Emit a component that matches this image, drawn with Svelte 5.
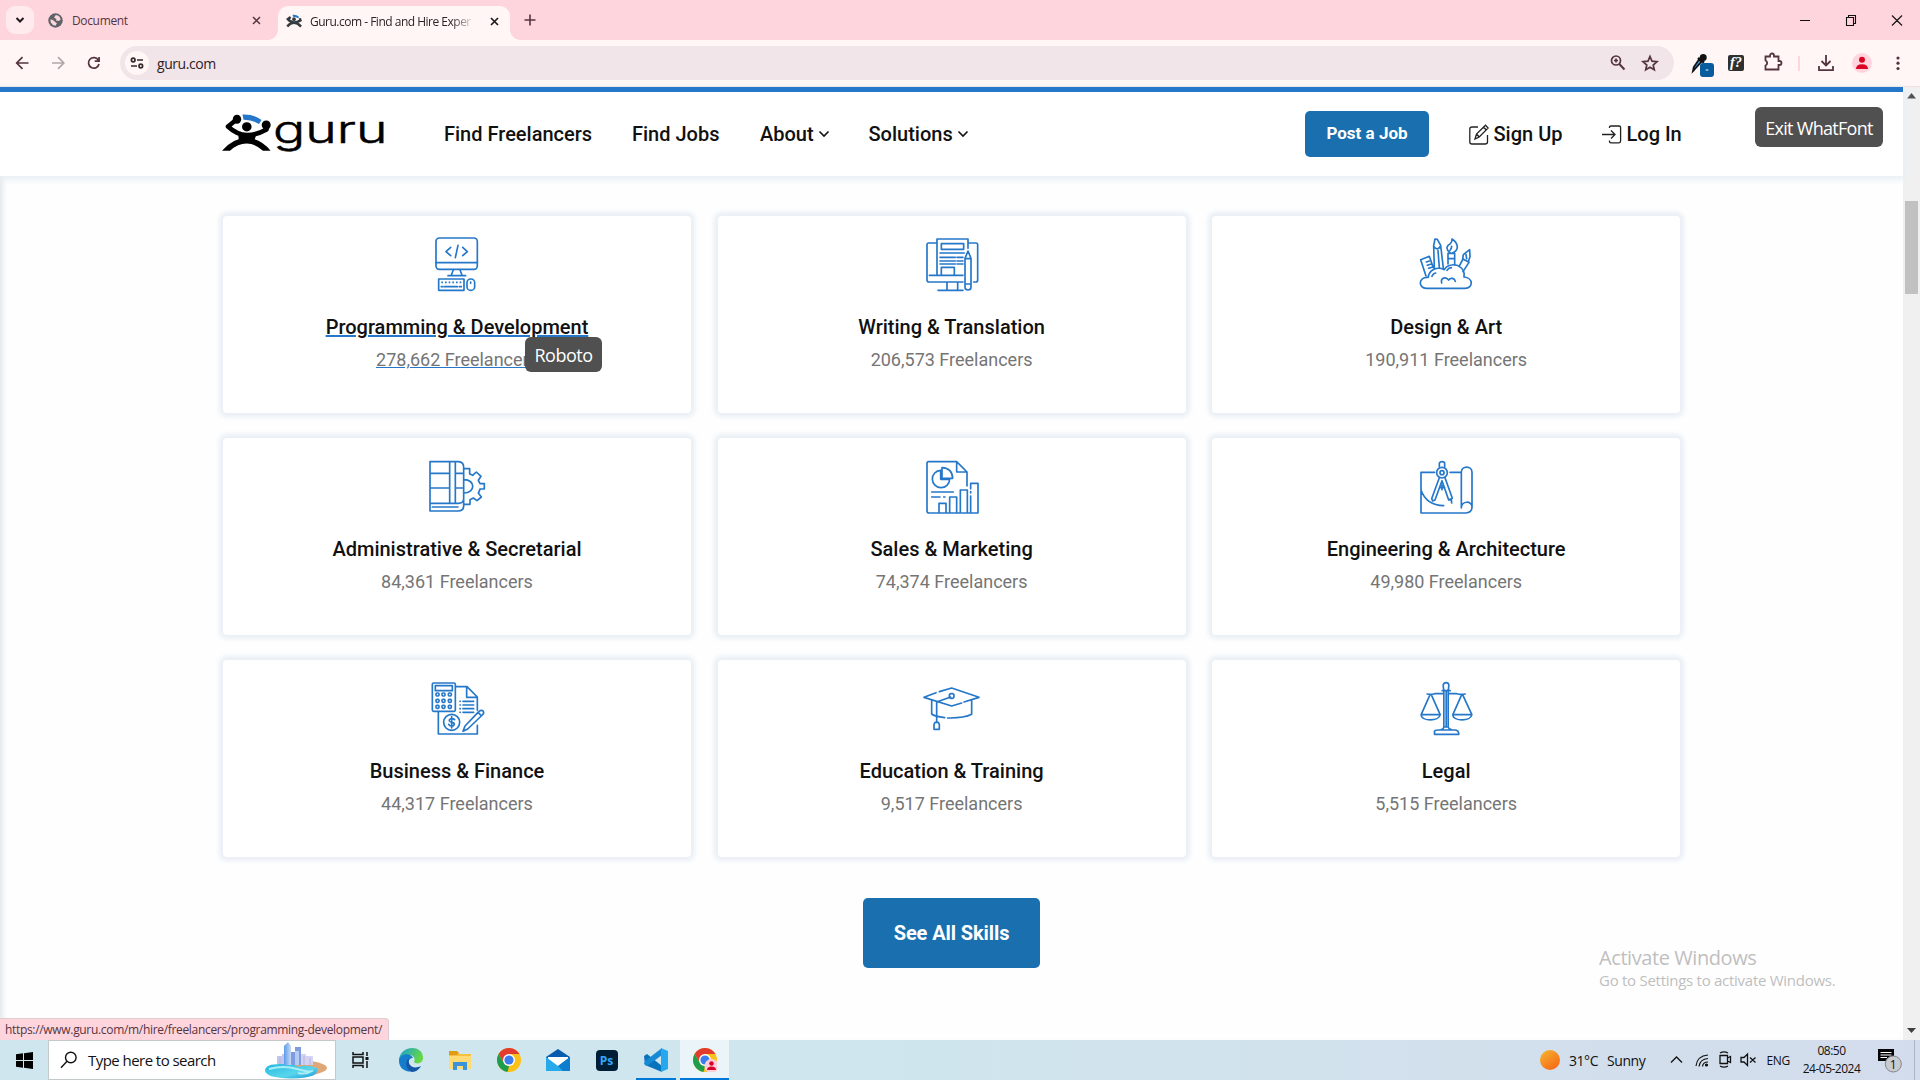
<script>
  const cards = [
    {
      title: 'Programming & Development', count: '278,662 Freelancers', hovered: true, box: '681 102 180 180',
      art: '<rect x="708" y="114" width="124" height="94" rx="10"/><path d="M708 188H832M760 209L754 226M780 209L786 226M744 227H797M752 142L738 155L752 167M788 142L802 155L788 167M774 136L766 173"/><rect x="716" y="237" width="76" height="34"/><rect x="801" y="237" width="23" height="34" rx="11"/><path d="M724 247H784" stroke-dasharray="5 6" stroke-linecap="butt"/><path d="M724 260H729M734 260H772M778 260H784M812 246V250"/>'
    },
    {
      title: 'Writing & Translation', count: '206,573 Freelancers', box: '64 57 180 180',
      art: '<path d="M107 84H84Q79 84 79 89V195Q79 201 85 201H187M204 84H226Q231 84 231 89V195Q231 201 226 201H219M86 181H187M109 180V72H202V100M139 203V224M171 203V224M112 226H187"/><rect x="122" y="86" width="67" height="17"/><path d="M118 114H191M118 127H164M169 127H187M118 138H164M169 138H187M118 147H164M169 147H187M122 180V157H161V180"/><path d="M193 130L202 108L211 130V217Q211 225 202 225Q193 225 193 217ZM193 131H211M193 207H211"/>'
    },
    {
      title: 'Design & Art', count: '190,911 Freelancers', box: '49 57 180 180',
      art: '<path d="M83 187C55 187 56 220 80 220H196C222 220 221 188 193 186C197 164 178 146 156 150C145 151 138 157 134 164C111 153 87 166 86 187M126 204C122 189 138 183 147 195C153 186 165 190 167 199M97 184Q99 176 108 174M142 166Q147 158 155 158"/><path d="M79 183L63 134L89 124L101 158M80 141L89 138M83 151L97 146M87 160L99 156M104 160L102 92L106 72L113 73L123 91L131 160M102 94Q113 110 123 93M115 107L119 158M145 147V115H165V149M145 131H165M151 113C136 101 142 91 151 87Q158 81 157 72Q172 82 173 95Q173 108 158 114M156 94Q155 103 151 106M180 151L190 132L208 142L190 170M189 132L191 119L210 104L211 125L206 140M199 119L201 131"/>'
    },
    {
      title: 'Administrative & Secretarial', count: '84,361 Freelancers', box: '51 34 180 180',
      art: '<path d="M60 51H145Q161 52 161 68V185Q160 199 145 199H60ZM60 176H145Q160 176 161 163M60 86H119M136 86H161M60 130H119M136 130H161M119 51V176M136 51V176M67 187H144M161 72H179V88Q184 89 188 92L199 82L213 95L205 107L210 117H223V133H210Q208 140 205 145L214 157L201 168L190 160L180 165V179H161M162 105C197 105 197 145 162 145"/>'
    },
    {
      title: 'Sales & Marketing', count: '74,374 Freelancers', box: '64 34 180 180',
      art: '<path d="M199 124V82L168 51H84Q79 51 79 57V199Q79 205 85 205H232V116H210V132M168 52V82H198M210 141V145M210 154V204M115 204V176H136V204M147 204V157H168V204M179 204V136H200V204M93 142H158M93 157H118M129 157H133"/><path d="M120 77A26 26 0 1 0 147 104H120ZM124 69V101H156Q155 71 124 69Z"/>'
    },
    {
      title: 'Engineering & Architecture', count: '49,980 Freelancers', box: '49 34 180 180',
      art: '<path d="M105 83H64V205H198Q217 204 217 187V83C217 62 185 62 185 83V190M151 83H184M185 189C186 167 217 168 217 187M64 136Q80 182 132 183"/><circle cx="127" cy="84" r="16"/><circle cx="127" cy="84" r="6"/><path d="M119 67V57Q120 51 127 51Q135 51 135 57V67M119 99L96 162L99 169L106 166L127 108L147 166L155 165L156 175M136 99L158 161L147 166M120 129H135M127 122V135"/>'
    },
    {
      title: 'Business & Finance', count: '44,317 Freelancers', box: '51 27 180 180',
      art: '<rect x="67" y="42" width="69" height="85" rx="4"/><rect x="76" y="50" width="51" height="15"/><path d="M137 53H171L202 84V124M85 128V195H202V169M170 54V85H202"/><rect x="78" y="72" width="9" height="9" rx="3"/><rect x="96" y="72" width="9" height="9" rx="3"/><rect x="115" y="72" width="9" height="9" rx="3"/><rect x="78" y="91" width="9" height="9" rx="3"/><rect x="96" y="91" width="9" height="9" rx="3"/><rect x="115" y="91" width="9" height="9" rx="3"/><rect x="78" y="109" width="9" height="9" rx="3"/><rect x="96" y="109" width="9" height="9" rx="3"/><rect x="115" y="109" width="9" height="9" rx="3"/><path d="M150 97H151M159 97H191M150 108H151M159 108H191M150 119H151M159 119H191M150 130H151M159 130H191"/><circle cx="125" cy="160" r="24"/><path d="M134 152C128 146 116 149 118 156C121 162 134 158 133 166C130 174 119 172 116 166M125 143V177M159 187L165 171L207 127Q215 121 220 127Q223 132 217 138L173 180ZM204 130L214 140"/>'
    },
    {
      title: 'Education & Training', count: '9,517 Freelancers', box: '64 27 180 180',
      art: '<path d="M106 71L70 85L153 111L183 102M190 99L235 85L153 57L116 68M93 95V135Q101 142 132 146M141 147Q190 148 213 136V94M108 158V99L150 84"/><rect x="146" y="74" width="14" height="14" rx="6"/><path d="M103 160H113L116 166V181H100V166Z"/>'
    },
    {
      title: 'Legal', count: '5,515 Freelancers', box: '1549.5 27 180 180',
      art: '<path d="M1633 174V61M1646 174V61M1632 60L1631 48Q1633 41 1640 41Q1647 41 1648 48L1647 61M1628 65H1652M1583 75Q1595 78 1606 74H1633M1697 75Q1684 78 1672 74H1646M1592 76L1565 137C1566 158 1619 158 1622 137L1595 76M1565 137H1622M1687 76L1660 137C1661 158 1714 158 1717 137L1689 76M1660 137H1717M1605 196V187Q1606 183 1615 183H1665Q1678 183 1678 196ZM1625 182Q1632 181 1633 174H1646Q1648 181 1656 182M1640 66V174"/>'
    }
  ];
</script>

{#snippet chrome(clip)}
  <svg class="app" viewBox="0 0 24 24">
    <circle cx="12" cy="12" r="12" fill="#fbc116" />
    <path d="M1.6 6A12 12 0 0 1 22.4 6H12L7 15Z" fill="#e33b2e" />
    <path d="M1.6 6L6.8 15Q9 18 12 18L10.5 23.9A12 12 0 0 1 1.6 6Z" fill="#1e9e4c" />
    <circle cx="12" cy="12" r="6" fill="#fff" /><circle cx="12" cy="12" r="4.6" fill="#3b7ded" />
    {#if clip}
      <circle cx="18.5" cy="18" r="7" fill="#fbd0da" /><circle cx="18.5" cy="15.5" r="2.3" fill="#d9032b" /><path d="M14 22Q14 18.5 18.5 18.5T23 22Z" fill="#d9032b" />
    {/if}
  </svg>
{/snippet}

<div class="screen">
  <div class="tabs">
    <div class="tabsearch"><svg width="10" height="10" viewBox="0 0 10 10"><path d="M1.5 3L5 6.5L8.5 3" fill="none" stroke="#1f1a1c" stroke-width="2" /></svg></div>
    <div class="tab idle">
      <svg width="15" height="15" viewBox="0 0 16 16"><circle cx="8" cy="8" r="7.7" fill="#5f6368" /><path d="M2.5 7Q5 7 6.5 8.5T9.5 11L8 13.5Q4.5 13 3 10ZM8 2.5L6.5 5L9 6.5L8.5 8L11.5 8.5L13.5 7Q13 3.5 10 2.5Z" fill="#ffd5dd" /></svg>
      <span>Document</span>
      <svg class="x" width="9" height="9" viewBox="0 0 9 9"><path d="M1 1L8 8M8 1L1 8" stroke="#54353f" stroke-width="1.5" /></svg>
    </div>
    <div class="tab active">
      <svg width="16" height="14" viewBox="0 0 52 40"><path d="M15 7L6 14Q16 25 26 25T47 18L45 11M4 38Q25 14 49 38" fill="none" stroke="#353c40" stroke-width="8" /><circle cx="26" cy="14" r="6" fill="#353c40" /><path d="M22 3Q33 2 41 9" fill="none" stroke="#2477c9" stroke-width="6" /></svg>
      <span class="fade">Guru.com - Find and Hire Exper</span>
      <svg class="x" width="9" height="9" viewBox="0 0 9 9"><path d="M1 1L8 8M8 1L1 8" stroke="#1f1a1c" stroke-width="1.7" /></svg>
    </div>
    <svg class="plus" width="12" height="12" viewBox="0 0 12 12"><path d="M6 .5V11.5M.5 6H11.5" stroke="#54353f" stroke-width="1.6" /></svg>
    <svg class="wincontrols" width="104" height="14" viewBox="0 0 104 14" fill="none" stroke="#111" stroke-width="1.1"><path d="M1 7.5H11M47.5 4.5H54.5V12.5H47.5ZM49.5 4.5V2.5H56.5V10.5H54.5M93 2.5L103 12.5M103 2.5L93 12.5" /></svg>
  </div>

  <div class="toolbar">
    <svg class="navicons" width="96" height="20" viewBox="0 0 96 20" fill="none" stroke-width="1.7"><path d="M20.5 10H9M14.5 4.2L8.7 10L14.5 15.8" stroke="#54353f" /><path d="M44 10H55.5M50 4.2L55.8 10L50 15.8" stroke="#b4a5a9" /><path d="M90.3 7A5.3 5.3 0 1 0 91 11M91.1 4V8.2H86.7" stroke="#54353f" /></svg>
    <div class="omni">
      <div class="chip"><svg width="14" height="12" viewBox="0 0 14 12" fill="none" stroke="#332a2d" stroke-width="1.7"><circle cx="3.2" cy="3" r="1.8" /><path d="M7 3H13M1 9H7" /><circle cx="10.8" cy="9" r="1.8" /></svg></div>
      <span>guru.com</span>
      <svg class="omniicons" width="56" height="20" viewBox="0 0 56 20" fill="none" stroke="#54353f" stroke-width="1.7"><circle cx="8" cy="7.5" r="4.5" /><path d="M11.3 11L16.5 16.5" stroke-width="2" /><path d="M6 7.5H10M8 5.5V9.5" /><path d="M42 3.5L44 8.2L49 8.6L45.2 12L46.3 16.8L42 14.2L37.7 16.8L38.8 12L35 8.6L40 8.2Z" /></svg>
    </div>
    <svg class="ext" width="222" height="28" viewBox="0 0 222 28" fill="none">
      <path d="M7 21L6 22L6.8 18L12 10.5L14.5 12.5Z" fill="#42a5ef" stroke="#111" stroke-width="1.8" /><path d="M11 9L17 13.5" stroke="#111" stroke-width="2.6" /><circle cx="16.2" cy="8.6" r="3.5" fill="#111" />
      <rect x="13" y="14" width="14" height="14" rx="3" fill="#075b9f" /><path d="M18.7 21H21.3" stroke="#fff" />
      <rect x="41" y="6" width="16" height="16" rx="2" fill="#303030" /><text x="43" y="18" font-family="Liberation Serif, serif" font-size="14" font-style="italic" font-weight="bold" fill="#fff" textLength="12" lengthAdjust="spacingAndGlyphs">f?</text>
      <path d="M78.5 7.5H83V6.5A2 2 0 0 1 87 6.5V7.5H91.5V12H92.5A2 2 0 0 1 92.5 16H91.5V20.5H78.5V16.5A2.7 2.7 0 0 0 78.5 11.5Z" stroke="#54353f" stroke-width="1.8" />
      <path d="M112 7V22" stroke="#ffd5dd" stroke-width="2" />
      <path d="M139 6V16M134.5 12L139 16.5L143.5 12M132 17V21.2H146V17" stroke="#54353f" stroke-width="1.8" />
      <circle cx="175" cy="14" r="10" fill="#ffd5dd" /><circle cx="175" cy="10.7" r="3" fill="#db0424" /><path d="M169 20Q169 15.2 175 15.2T181 20Z" fill="#db0424" />
      <g fill="#54353f"><circle cx="211" cy="9" r="1.6" /><circle cx="211" cy="14.2" r="1.6" /><circle cx="211" cy="19.5" r="1.6" /></g>
    </svg>
  </div>

  <div class="view">
    <main>
      <header>
        <svg class="logo" width="170" height="64" viewBox="0 -9 170 64">
          <path d="M15 8L7 14.5Q16 23 26 23T45.5 17.5L46 12" fill="none" stroke="#000" stroke-width="4.6" stroke-linejoin="round" />
          <path d="M17 20Q26 24 36 20L33 30Q26 27 18 30Z" />
          <path d="M1 38.7Q12 26 25.5 26T49.6 38.7H42Q34 31.5 25.5 31.5T9 38.7Z" />
          <ellipse cx="16" cy="7.3" rx="4.2" ry="4.5" /><ellipse cx="45.2" cy="13" rx="4.5" ry="4.6" /><ellipse cx="25.8" cy="14.8" rx="4.8" ry="4.6" />
          <path d="M21.5 2.5Q33 2 40.5 8L38 12Q31 7.5 22.5 7.7Z" fill="#2477c9" />
          <text x="52" y="30.6" font-family="Inter, sans-serif" font-size="38.5" font-weight="300" textLength="114.5" lengthAdjust="spacingAndGlyphs" stroke="#000" stroke-width=".5">guru</text>
        </svg>
        <nav>
          <span>Find Freelancers</span><span>Find Jobs</span>
          <span>About<svg width="12" height="8" viewBox="0 0 12 8"><path d="M1.5 1.5L6 6L10.5 1.5" fill="none" stroke="#111" stroke-width="1.6" /></svg></span>
          <span>Solutions<svg width="12" height="8" viewBox="0 0 12 8"><path d="M1.5 1.5L6 6L10.5 1.5" fill="none" stroke="#111" stroke-width="1.6" /></svg></span>
        </nav>
        <button class="post">Post a Job</button>
        <a class="account sign" href="#signup"><svg width="20" height="21" viewBox="0 0 20 21" fill="none" stroke="#222" stroke-width="1.3"><path d="M9 3H3Q.8 3 .8 5V18Q.8 20 3 20H16Q18.5 20 18.5 18V11M6 15L7.5 10L16.5 1.2L19.2 4L10.2 13ZM7.5 10L10.2 13M14.5 3L17.3 6" /></svg>Sign Up</a>
        <a class="account login" href="#login"><svg width="20" height="19" viewBox="0 0 20 19" fill="none" stroke="#222" stroke-width="1.3"><path d="M0 9.5H13M9 5.5L13 9.5L9 13.5M7.5 3V2Q7.5 1 9 1H17Q18.6 1 18.6 2.5V16Q18.6 17.8 17 17.8H9Q7.5 17.8 7.5 16.5V15.5" /></svg>Log In</a>
        <div class="whatfont">Exit WhatFont</div>
      </header>
      <section class="content">
        <div class="grid">
          {#each cards as card}
            <article class:hovered={card.hovered}>
              <svg viewBox={card.box} width="60" height="60">{@html card.art}</svg>
              <h3>{card.title}</h3>
              <p>{card.count}</p>
              {#if card.hovered}<div class="tip">Roboto</div>{/if}
            </article>
          {/each}
        </div>
        <button class="all">See All Skills</button>
      </section>
      <div class="watermark"><div>Activate Windows</div><p>Go to Settings to activate Windows.</p></div>
      <div class="status"><span>https://www.guru.com/m/hire/freelancers/programming-development/</span></div>
    </main>
    <div class="scroll">
      <svg width="9" height="6" viewBox="0 0 9 6"><path d="M0 5.5L4.5 0L9 5.5Z" fill="#505050" /></svg>
      <div class="thumb"></div>
      <svg class="down" width="9" height="6" viewBox="0 0 9 6"><path d="M0 0L4.5 5L9 0Z" fill="#404040" /></svg>
    </div>
  </div>

  <footer>
    <div class="start"><svg width="17" height="17" viewBox="0 0 17 17"><path d="M0 2.3L7 1.3V8H0ZM8 1.2L17 0V8H8ZM0 9H7V15.7L0 14.7ZM8 9H17V17L8 15.8Z" /></svg></div>
    <div class="search">
      <svg width="18" height="18" viewBox="0 0 18 18" fill="none" stroke="#111" stroke-width="1.4"><circle cx="10.8" cy="6.5" r="5.3" /><path d="M7 10.3L1 16.8" /></svg>
      <span>Type here to search</span>
      <svg class="city" width="64" height="38" viewBox="0 0 64 38">
        <defs><linearGradient id="sea" x2="1" y2="1"><stop stop-color="#20b9df" /><stop offset=".6" stop-color="#59d5ec" /><stop offset="1" stop-color="#1694d5" /></linearGradient><linearGradient id="tower"><stop stop-color="#5d9bea" /><stop offset="1" stop-color="#c6d9f6" /></linearGradient></defs>
        <ellipse cx="37" cy="27" rx="26" ry="7.5" fill="#dda778" /><path d="M1 29Q2 23 16 23Q30 22 34 26Q43 23 53 27Q57 37 27 37.5Q1 37 1 29Z" fill="url(#sea)" /><path d="M5 28Q20 24 33 28T49 29.5Q42 34 34 32" fill="none" stroke="#a9edf5" stroke-width="2" />
        <path d="M13 23V15H18V13H22V23Z" fill="#c3c6ea" /><path d="M20 24V5L24 1L27 5V24Z" fill="url(#tower)" /><path d="M27 24V11H31V6H37V24Z" fill="#7f9ce0" /><path d="M31 24V10H35V24Z" fill="#b4ccf3" /><path d="M37 24V13H42V15H49V24Z" fill="#d6d2f2" /><path d="M40 24V15M46 24V17M16 23V17" stroke="#b0b2de" />
      </svg>
    </div>
    <div class="slot"><svg width="17" height="16" viewBox="0 0 17 16" fill="none" stroke="#111" stroke-width="1.5"><path d="M1 0V2.5H11V0M1 16V13.5H11V16M1 5H11V11H1ZM15 0V4M15 9V16" /><path d="M13.5 6.5H16.5" stroke-width="3" /></svg></div>
    <div class="slot edge"><svg class="app" viewBox="0 0 24 24"><defs><linearGradient id="edge-top" x2="1" y2=".4"><stop stop-color="#159edb" /><stop offset="1" stop-color="#65d844" /></linearGradient></defs><path d="M0 12C1-3 24-4 24 10C24 15 18 17 15 14C17 10 14 7 10 7C5 7 1 10 0 14Z" fill="url(#edge-top)" /><path d="M0 13C0 5 12 4 14 10C10 10 9 14 10 17C12 21 18 21 22 18C17 27 0 25 0 13Z" fill="#167dcc" /><path d="M10 10C6 13 6 21 13 24C17 24 20 21 22 18C14 22 8 17 10 10Z" fill="#1756a6" /></svg></div>
    <div class="slot"><svg width="22" height="19" viewBox="0 0 22 19"><path d="M0 1H8L10 3H22V18H0Z" fill="#f7bf3e" /><path d="M0 0H8L10 2L8 4H0Z" fill="#de9b13" /><path d="M0 5H22V18H0Z" fill="#ffdb75" /><path d="M4 19V11H18V19H14V15H8V19Z" fill="#3b94da" /></svg></div>
    <div class="slot">{@render chrome(false)}</div>
    <div class="slot"><svg class="app" viewBox="0 0 24 24"><path d="M0 9L12 1L24 9V12H0Z" fill="#075cad" /><path d="M2 9H22V18H2Z" fill="#fff" /><path d="M0 9L12 18L24 9V23H0Z" fill="#28a9ea" /><path d="M24 9L12 18L17 23H24Z" fill="#0e7dce" /></svg></div>
    <div class="slot"><div class="ps">Ps</div></div>
    <div class="slot code"><svg class="app" viewBox="0 0 24 24"><path d="M0 8L3 6L18 18V24L1 17Z" fill="#0873bd" /><path d="M0 16L3 18L18 7V0L1 13Z" fill="#168ad4" /><path d="M17 0L24 3V21L17 24Z" fill="#27a8ee" /></svg></div>
    <div class="slot current">{@render chrome(true)}</div>
    <div class="weather"><i></i><span>31°C</span><span>Sunny</span></div>
    <svg class="tray" width="88" height="20" viewBox="0 0 88 20" fill="none" stroke="#111" stroke-width="1.3"><path d="M1 12.5L6.5 7L12 12.5" /><g stroke-width="1.2"><path d="M26 16Q27 6 38 5M29 16.5Q30 9 38 8.5M32.5 16.5Q33 12 38 12" /><circle cx="36.5" cy="15" r="1" fill="#111" /></g><path d="M50 5.5H57.5V13.5H50ZM57.5 8L60.5 6.5V12.5L57.5 11M50 3Q54 .8 58 3M50 16Q54 18.2 58 16M71 7.5H74L77.5 4V15.5L74 12H71ZM80 7.5L85.5 12.5M85.5 7.5L80 12.5" /></svg>
    <span class="lang">ENG</span>
    <div class="clock"><span>08:50</span><span>24-05-2024</span></div>
    <svg class="notice" width="26" height="26" viewBox="0 0 26 26"><path d="M1 2H17V14H12L9 17V14H1Z" fill="#050505" /><path d="M3.5 5.5H14.5M3.5 8H14.5M3.5 10.5H10" stroke="#fff" /><circle cx="16.3" cy="17" r="8" fill="#c9cbd0" stroke="#85878c" /><text x="16.3" y="21.5" text-anchor="middle" font-family="Open Sans, sans-serif" font-size="12" fill="#111">1</text></svg>
    <div class="peek"></div>
  </footer>
</div>

<style>
  :global(body) { margin: 0; overflow: hidden; }
  * { box-sizing: border-box; }
  svg { display: block; flex: none; }
  .screen { width: 1920px; height: 1080px; display: flex; flex-direction: column; font-family: "Open Sans", "Noto Sans", sans-serif; background: #fff; overflow: hidden; }
  .tabs { height: 40px; background: #ffd5dd; display: flex; align-items: center; padding-left: 6px; flex: none; }
  .tabsearch { width: 28px; height: 28px; border-radius: 9px; background: #ffebee; display: grid; place-items: center; }
  .tab { display: flex; align-items: center; font-size: 12px; letter-spacing: -.35px; color: #54353f; white-space: nowrap; }
  .tab .x { margin-left: auto; }
  .idle { width: 244px; padding: 0 17px 0 14px; gap: 9px; }
  .active { position: relative; width: 232px; height: 34px; margin-top: 6px; padding: 0 11px 4px 8px; gap: 8px; border-radius: 10px 10px 0 0; background: #fff6f5; color: #2d2225; letter-spacing: -.5px; }
  .active::before, .active::after { content: ""; position: absolute; bottom: 0; width: 10px; height: 10px; }
  .active::before { left: -10px; background: radial-gradient(circle at 0 0, transparent 9.5px, #fff6f5 10px); }
  .active::after { right: -10px; background: radial-gradient(circle at 100% 0, transparent 9.5px, #fff6f5 10px); }
  .fade { mask-image: linear-gradient(90deg, #000 88%, rgb(0 0 0 / .15)); }
  .plus { margin-left: 14px; }
  .wincontrols { margin-left: auto; margin-right: 17px; }
  .toolbar { height: 47px; display: flex; align-items: center; background: #fff6f5; border-bottom: 1px solid #f5dcde; flex: none; padding-left: 8px; }
  .navicons { margin-right: 16px; }
  .omni { width: 1554px; height: 34px; border-radius: 17px; background: #f2e5e9; display: flex; align-items: center; padding: 0 10px 0 5px; font-size: 14px; color: #2d2225; letter-spacing: -.45px; }
  .chip { width: 24px; height: 24px; border-radius: 50%; background: #fff6f5; display: grid; place-items: center; margin-right: 8px; }
  .omniicons { margin-left: auto; }
  .ext { margin-left: 13px; }
  .view { height: 953px; display: flex; }
  main { position: relative; width: 1903px; background: #fefefe; display: flex; flex-direction: column; }
  header { position: relative; z-index: 1; height: 89px; border-top: 5px solid #2477c9; background: #fff; display: flex; align-items: center; padding-left: 221px; box-shadow: 0 2px 6px 2px #e8eff5; font-family: Roboto, sans-serif; color: #111; }
  .logo { margin-top: 2px; }
  nav { margin-left: 53px; width: 861px; display: grid; grid-template-columns: 188px 128px 108.5px auto; font-size: 20px; font-weight: 500; }
  nav span { display: flex; align-items: center; gap: 4px; white-space: nowrap; }
  button { font-family: Roboto, sans-serif; border: 0; background: #1a6faf; color: #fff; font-weight: 700; padding: 0; border-radius: 5px; }
  .post { width: 124px; height: 46px; font-size: 17px; padding-bottom: 2px; }
  .account { color: #111; text-decoration: none; display: flex; align-items: center; gap: 4.5px; font-size: 20px; font-weight: 500; white-space: nowrap; }
  .sign { margin-left: 40px; width: 133px; }
  .login { width: 153px; }
  .whatfont { width: 128px; height: 40px; margin-top: -14px; padding-top: 2px; border-radius: 6px; background: #505050; color: #fff; display: grid; place-items: center; font: 18px "Open Sans", sans-serif; letter-spacing: -.72px; white-space: nowrap; }
  .content { flex: 1; padding: 40px 0 0 223px; box-shadow: inset 6px 0 6px -4px #dce1e5; }
  .grid { display: grid; grid-template-columns: repeat(3, 468px); grid-auto-rows: 197px; gap: 25.2px 26.6px; }
  article { position: relative; background: #fff; border-radius: 4px; box-shadow: 0 0 5px 4px #e9eff5; display: flex; flex-direction: column; align-items: center; padding-top: 18px; font-family: Roboto, sans-serif; }
  article svg { fill: none; stroke: #2477c9; stroke-width: 5; stroke-linejoin: round; stroke-linecap: round; }
  h3 { margin: 21px 0 0; font-size: 20px; line-height: 24px; font-weight: 500; color: #111; }
  p { margin: 9px 0 0; font-size: 18px; line-height: 24px; color: #757575; }
  .hovered h3, .hovered p { text-decoration: underline #2477c9; }
  .tip { position: absolute; left: 302px; top: 121px; width: 77px; height: 35px; padding-top: 1px; border-radius: 6px; background: #505050; color: #fff; display: grid; place-items: center; font: 18px/24px "Open Sans", sans-serif; letter-spacing: -.5px; }
  .all { display: block; width: 177px; height: 70px; margin: 40.8px 0 0 640px; font-size: 20px; letter-spacing: -.1px; }
  .watermark { position: absolute; left: 1599px; top: 857px; color: #bfbfbf; font-size: 20px; line-height: 28px; letter-spacing: -.42px; white-space: nowrap; }
  .watermark p { margin: -1px 0 0; font-size: 15px; line-height: 18px; color: #bfbfbf; letter-spacing: -.27px; }
  .status { position: absolute; left: 0; bottom: 0; width: 389px; height: 22px; background: #ffd5dd; border: solid #dfcdd1; border-width: 1px 1px 0 0; border-radius: 0 4px 0 0; color: #54353f; font-size: 12px; line-height: 21px; padding-left: 5px; letter-spacing: -.32px; white-space: nowrap; }
  .scroll { width: 17px; background: #f0f0f0; display: flex; flex-direction: column; align-items: center; padding: 6px 0 6px; }
  .thumb { width: 13px; height: 93px; background: #c1c1c1; margin-top: 102px; }
  .down { margin-top: auto; }
  footer { height: 40px; flex: none; background: linear-gradient(90deg, #cfe6ee 0 45%, #d2dfec 80%, #d3dcec); display: flex; align-items: center; color: #111; }
  .start { width: 48px; padding-left: 16px; }
  .search { width: 288px; height: 40px; background: #fff; border: 1px solid #c4c9cb; display: flex; align-items: center; padding: 0 7px 0 11px; font-size: 15px; letter-spacing: -.55px; gap: 10px; white-space: nowrap; }
  .city { margin-left: auto; }
  .slot { width: 49px; height: 40px; display: grid; place-items: center; }
  .edge { margin-left: 1px; }
  .app { width: 24px; height: 24px; }
  .ps { width: 22px; height: 21px; border-radius: 4px; background: #001e36; color: #31a8ff; font: 700 12px/21px "Open Sans", sans-serif; text-align: center; }
  .code { background: linear-gradient(#0078d7, #0078d7) 50% 100% / 40px 2px no-repeat; }
  .current { background: #ebf4f8; border-bottom: 2px solid #0078d7; padding-top: 2px; }
  .weather { margin-left: 811px; width: 130px; display: flex; align-items: center; font-size: 14px; letter-spacing: -.45px; gap: 9px; }
  .weather i { width: 20px; height: 20px; border-radius: 50%; background: linear-gradient(145deg, #f4b632, #f66010); }
  .lang { width: 36px; margin-left: 8.5px; font-size: 12px; letter-spacing: -.3px; }
  .clock { width: 60px; display: flex; flex-direction: column; align-items: center; font-size: 12px; line-height: 18px; letter-spacing: -.5px; white-space: nowrap; margin-left: -1px; }
  .notice { margin-left: 15.5px; }
  .peek { width: 1px; height: 40px; margin-left: 11px; background: #aab4c2; }
</style>
